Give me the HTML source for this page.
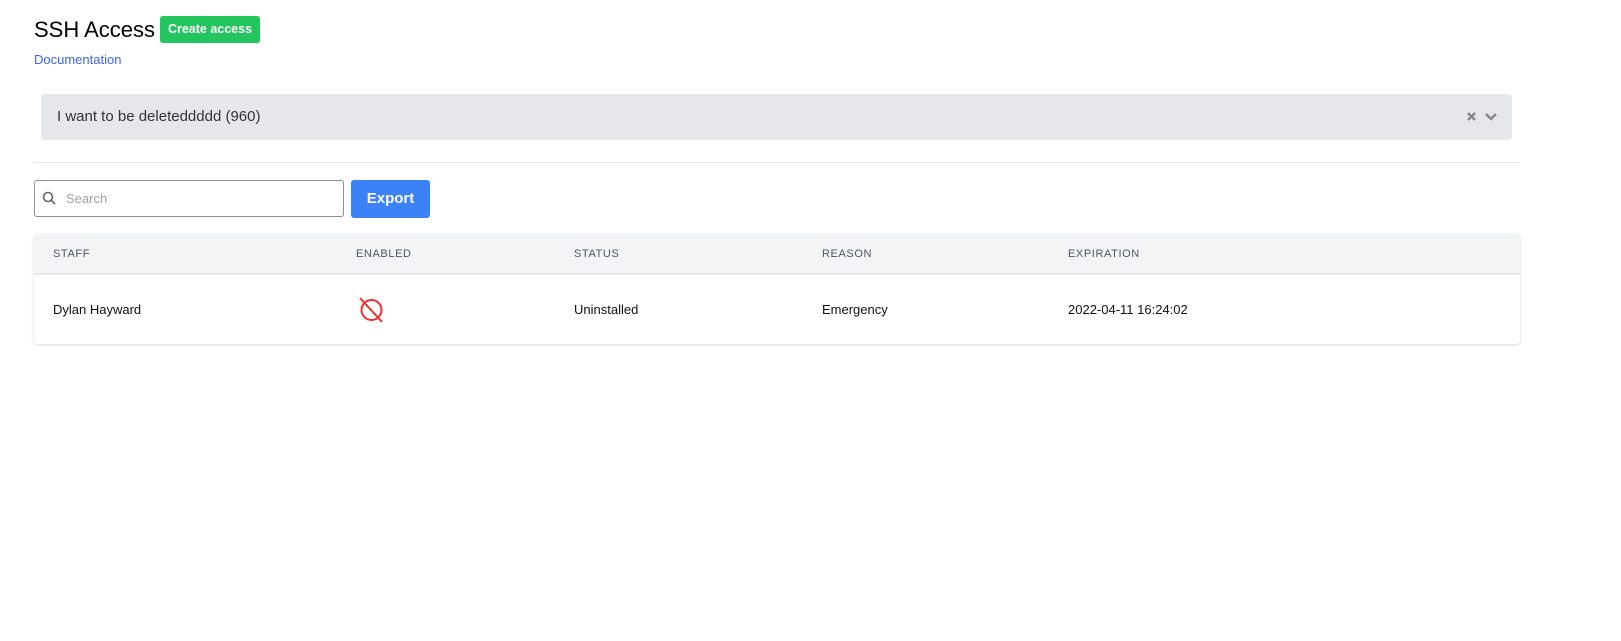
<!DOCTYPE html>
<html><head><style>
body{margin:0;background:#fff;font-family:"Liberation Sans",sans-serif;color:#111;}
.wrap{position:relative;width:1621px;height:641px;}
.abs{position:absolute;}
</style></head><body><div class="wrap">
<div class="abs" style="left:34px;top:16px;font-size:22px;line-height:28px;color:#000">SSH Access</div>
<div class="abs" style="left:160px;top:16px;width:100px;height:27px;background:#22c55e;border-radius:3px;color:#fff;font-weight:bold;font-size:12.5px;line-height:27px;text-align:center">Create access</div>
<div class="abs" style="left:34px;top:52px;font-size:13px;color:#3b63f6">Documentation</div>
<div class="abs" style="left:41px;top:94px;width:1471px;height:46px;background:#e5e7eb;border-radius:4px"></div>
<div class="abs" style="left:57px;top:108px;font-size:15px;color:#333">I want to be deleteddddd (960)</div>
<svg class="abs" style="left:1465px;top:110px" width="36" height="14"><path d="M3 3l7 7M10 3l-7 7" stroke="#888" stroke-width="2.5"/><path d="M21 4l5 5 5-5" stroke="#888" stroke-width="2.5" fill="none"/></svg>
<div class="abs" style="left:34px;top:162px;width:1486px;height:1px;background:#e5e7eb"></div>
<div class="abs" style="left:34px;top:180px;width:308px;height:35px;border:1px solid #8a8fa0;border-radius:3px"></div>
<svg class="abs" style="left:42px;top:191px" width="14" height="14"><circle cx="6" cy="6" r="4.5" stroke="#666" stroke-width="1.6" fill="none"/><path d="M9.5 9.5l3.5 3.5" stroke="#666" stroke-width="1.6"/></svg>
<div class="abs" style="left:66px;top:191px;font-size:13px;color:#9ca3af">Search</div>
<div class="abs" style="left:351px;top:180px;width:79px;height:38px;background:#3b82f6;border-radius:3px;color:#fff;font-weight:bold;font-size:15px;line-height:38px;text-align:center">Export</div>
<div class="abs" style="left:34px;top:234px;width:1486px;height:110px;border-radius:4px;box-shadow:0 1px 3px rgba(0,0,0,0.15)"></div>
<div class="abs" style="left:34px;top:234px;width:1486px;height:39px;background:#f3f4f6;border-bottom:2px solid #e5e7eb"></div>
<div class="abs" style="top:248px;left:53px;font-size:11px;letter-spacing:0.6px;color:#4b5563">STAFF</div>
<div class="abs" style="top:248px;left:356px;font-size:11px;letter-spacing:0.6px;color:#4b5563">ENABLED</div>
<div class="abs" style="top:248px;left:574px;font-size:11px;letter-spacing:0.6px;color:#4b5563">STATUS</div>
<div class="abs" style="top:248px;left:822px;font-size:11px;letter-spacing:0.6px;color:#4b5563">REASON</div>
<div class="abs" style="top:248px;left:1068px;font-size:11px;letter-spacing:0.6px;color:#4b5563">EXPIRATION</div>
<div class="abs" style="top:302px;left:53px;font-size:13px">Dylan Hayward</div>
<svg class="abs" style="left:358px;top:296px" width="28" height="28"><circle cx="13.5" cy="14" r="10" stroke="#f03030" stroke-width="2" fill="none"/><path d="M2 2l22 24" stroke="#f03030" stroke-width="2"/></svg>
<div class="abs" style="top:302px;left:574px;font-size:13px">Uninstalled</div>
<div class="abs" style="top:302px;left:822px;font-size:13px">Emergency</div>
<div class="abs" style="top:302px;left:1068px;font-size:13px">2022-04-11 16:24:02</div>
</div></body></html>
